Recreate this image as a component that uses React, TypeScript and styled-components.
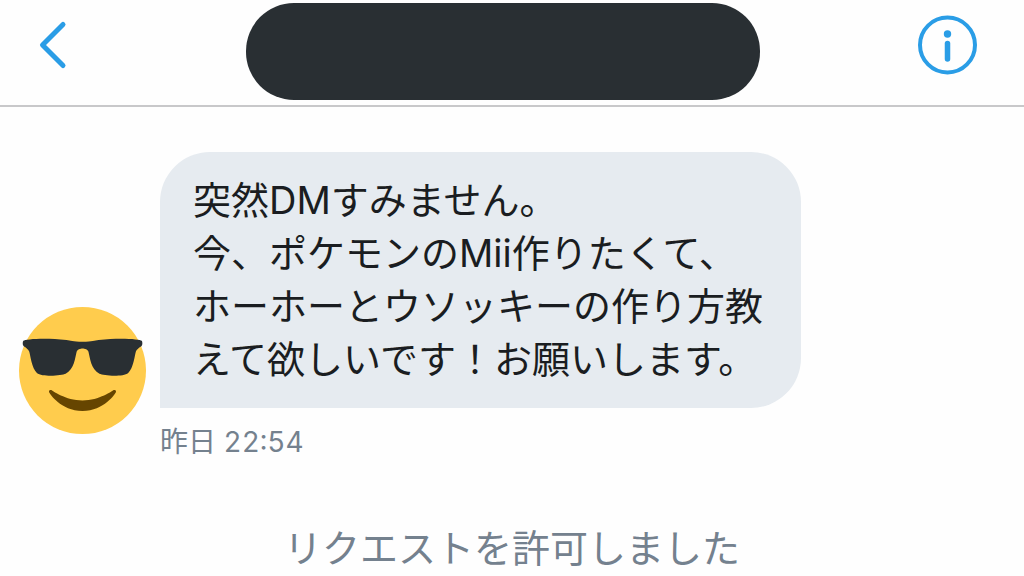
import React from "react";
import styled, { createGlobalStyle } from "styled-components";

const GlobalStyle = createGlobalStyle`
  *, *::before, *::after { box-sizing: border-box; }
  body {
    margin: 0;
    background: #fefefe;
    color: #1a1d21;
    font-family: Inter, "Noto Sans CJK JP", sans-serif;
    overflow-x: hidden;
  }
`;

const Header = styled.header`
  display: flex;
  align-items: flex-start;
  justify-content: space-between;
  height: 107px;
  padding: 3px 47px 0 38px;
  border-bottom: 2px solid #c8c8ca;
`;

const IconButton = styled.button<{ $width: number }>`
  display: flex;
  width: ${(p) => p.$width}px;
  margin-top: 12px;
  padding: 0;
  border: 0;
  background: none;
  color: #2a9de6;
  cursor: pointer;
`;

const NamePill = styled.div`
  flex: 0 1 514px;
  height: 97px;
  border-radius: 48px;
  background: #292f33;
`;

const Thread = styled.main`
  padding: 45px 19px 0;
`;

const MessageRow = styled.article`
  display: flex;
  align-items: flex-end;
  gap: 14px;
`;

const Avatar = styled.svg`
  flex: none;
  width: 127px;
  height: 127px;
  margin-bottom: 26px;
`;

const MessageColumn = styled.div`
  flex: 0 1 641px;
`;

const Bubble = styled.p`
  margin: 0;
  padding: 22px 33px;
  border-radius: 50px 50px 50px 0;
  background: #e6ebf0;
  font-size: 38px;
  font-weight: 400;
  line-height: 53px;
`;

const Timestamp = styled.time`
  display: block;
  margin-top: 16px;
  color: #74818e;
  font-size: 28px;
  font-variant-numeric: tabular-nums;
  font-feature-settings: "case";
  line-height: 36px;
`;

const Notice = styled.p`
  margin: 62px 0 0;
  color: #74818e;
  font-size: 38px;
  line-height: 53px;
  text-align: center;
`;

const lines = [
  "突然DMすみません。",
  "今、ポケモンのMii作りたくて、",
  "ホーホーとウソッキーの作り方教",
  "えて欲しいです！お願いします。",
];

export default function App() {
  return (
    <>
      <GlobalStyle />
      <Header>
        <IconButton type="button" aria-label="戻る" $width={50}>
          <svg width="30" height="60" viewBox="0 0 30 60" fill="none" stroke="currentColor" strokeWidth="5" strokeLinecap="round" strokeLinejoin="round">
            <path d="M25 9.500L4.500 30L25 50.500" />
          </svg>
        </IconButton>
        <NamePill />
        <IconButton type="button" aria-label="詳細" $width={59}>
          <svg width="59" height="60" viewBox="0 0 59 60" fill="none">
            <circle cx="29.500" cy="30" r="27.500" stroke="currentColor" strokeWidth="4" />
            <circle cx="29.500" cy="19" r="3.700" fill="currentColor" />
            <path d="M29.500 28.500V44" stroke="currentColor" strokeWidth="5.500" strokeLinecap="round" />
          </svg>
        </IconButton>
      </Header>
      <Thread>
        <MessageRow>
          <Avatar viewBox="0 0 36 36" role="img" aria-label="アイコン">
            <circle cx="18" cy="18" r="18" fill="#ffcc4d" />
            <path
              fill="#292f33"
              d="M1.24 11.018c.24.239 1.438.957 1.677 1.675.24.717.72 4.784 2.158 5.981 1.483 1.232 7.077.774 8.148.24 2.397-1.195 2.691-4.531 3.115-6.221.239-.957 1.677-.957 1.677-.957s1.438 0 1.678.956c.424 1.691.72 5.027 3.115 6.221 1.072.535 6.666.994 8.151-.238 1.436-1.197 1.915-5.264 2.155-5.983.238-.717 1.438-1.435 1.677-1.674.241-.239.241-1.196 0-1.436-.479-.478-6.134-.904-12.223-.239-1.215.133-1.677.478-4.554.478-2.875 0-3.339-.346-4.553-.478-6.085-.666-11.741-.24-12.221.239-.239.239-.239 1.197 0 1.436z"
            />
            <path
              fill="#664500"
              d="M27.335 23.629c-.178-.161-.444-.171-.635-.029-.039.029-3.922 2.900-8.700 2.900-4.766 0-8.662-2.871-8.700-2.900-.191-.142-.457-.13-.635.029-.177.16-.217.424-.094.628C8.700 24.472 11.788 29.500 18 29.500s9.301-5.028 9.429-5.243c.123-.205.084-.468-.094-.628z"
            />
          </Avatar>
          <MessageColumn>
            <Bubble>
              {lines.map((line, i) => (
                <React.Fragment key={line}>
                  {i > 0 && <br />}
                  {line}
                </React.Fragment>
              ))}
            </Bubble>
            <Timestamp>昨日 22:54</Timestamp>
          </MessageColumn>
        </MessageRow>
        <Notice>リクエストを許可しました</Notice>
      </Thread>
    </>
  );
}
